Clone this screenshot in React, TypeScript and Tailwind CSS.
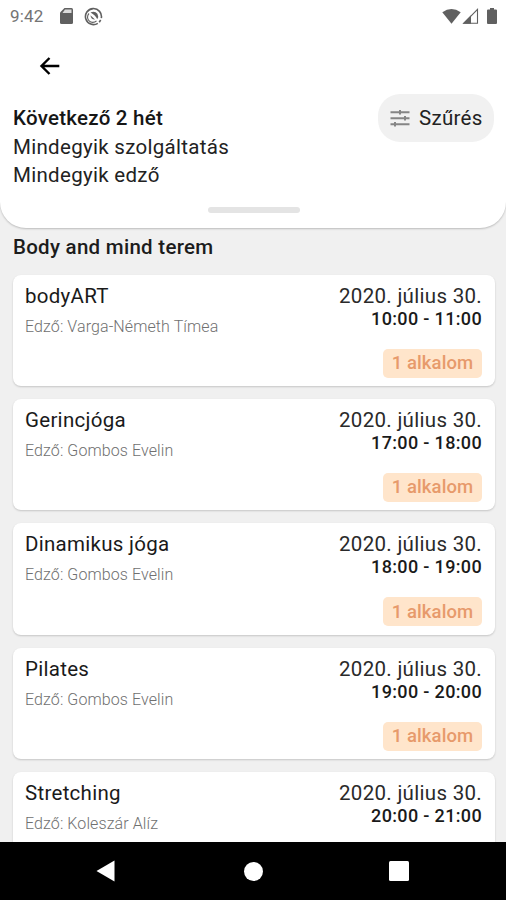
import React from "react";

const sessions = [
  { title: "bodyART", trainer: "Varga-Németh Tímea", date: "2020. július 30.", time: "10:00 - 11:00", badge: "1 alkalom" },
  { title: "Gerincjóga", trainer: "Gombos Evelin", date: "2020. július 30.", time: "17:00 - 18:00", badge: "1 alkalom" },
  { title: "Dinamikus jóga", trainer: "Gombos Evelin", date: "2020. július 30.", time: "18:00 - 19:00", badge: "1 alkalom" },
  { title: "Pilates", trainer: "Gombos Evelin", date: "2020. július 30.", time: "19:00 - 20:00", badge: "1 alkalom" },
  { title: "Stretching", trainer: "Koleszár Alíz", date: "2020. július 30.", time: "20:00 - 21:00" },
];

const StatusBar: React.FC = () => (
  <div className="flex h-8 items-center justify-between pl-[10px] pr-[9px] text-[#606060]">
    <div className="flex items-center">
      <span className="w-[50px] text-[17px] leading-none tracking-[0.2px] text-[#747474]">9:42</span>
      <svg width="13" height="16" viewBox="0 0 13 16">
        <path d="M4.5 0H11.5Q13 0 13 1.5V14.5Q13 16 11.5 16H1.5Q0 16 0 14.5V4.5Z" fill="currentColor" />
        <path d="M5 1.5H11.5V5H2.5Z" fill="#dcdcdc" />
      </svg>
      <svg className="ml-[11px]" width="19" height="19" viewBox="0 0 19 19" fill="none">
        <path d="M13.8 16.3A8 8 0 1 1 17.3 11.2" stroke="currentColor" strokeWidth="1.6" />
        <path d="M16.7 13L15.2 15.2" stroke="currentColor" strokeWidth="1.6" />
        <path d="M5 6.5A5.2 5.2 0 0 0 12.5 13.8" stroke="currentColor" strokeWidth="1.1" />
        <path d="M6.5 5.4Q11 3.6 13.4 6.8Q15 9.6 13.2 12.2Q11.5 8 6.5 5.4Z" fill="currentColor" />
        <path d="M6.4 8.2L11 12.4Q7 12.6 6.4 8.2Z" fill="currentColor" />
      </svg>
    </div>
    <div className="flex items-center">
      <svg width="19" height="15" viewBox="0 0 19 15">
        <path d="M0.3 3.3Q9.5 -3.3 18.7 3.3L9.5 14.8Z" fill="currentColor" />
      </svg>
      <svg className="ml-[1px]" width="17" height="16" viewBox="0 0 17 16">
        <path d="M1.8 15.3L15.5 1.4V15.3Z" fill="none" stroke="currentColor" strokeWidth="1.1" />
        <path d="M0.5 15.8L9 7.2V15.8Z" fill="currentColor" />
      </svg>
      <svg className="ml-[8px]" width="10" height="16" viewBox="0 0 10 16">
        <path d="M3 0H7V1.6H9Q10 1.6 10 2.6V15Q10 16 9 16H1Q0 16 0 15V2.6Q0 1.6 1 1.6H3Z" fill="currentColor" />
      </svg>
    </div>
  </div>
);

const FilterIcon: React.FC = () => (
  <svg width="20" height="18" viewBox="0 0 20 18" fill="none" stroke="#858585" strokeWidth="2">
    <path d="M0.5 3.2H19.5M0.5 9.3H19.5M0.5 15.2H19.5" />
    <path d="M10 0.9V5.5M15 7V11.6M5 12.9V17.5" strokeWidth="2" />
  </svg>
);

const Header: React.FC = () => (
  <header className="h-[228px] shrink-0 rounded-b-[26px] bg-white shadow-[0_1px_2px_rgba(0,0,0,0.22)]">
    <StatusBar />
    <div className="pl-[39px] pt-[24px]">
      <svg width="21" height="20" viewBox="0 0 21 20" fill="none" stroke="#000" strokeWidth="2.4">
        <path d="M20.3 10H2.8M10.5 2L2.5 10L10.5 18" />
      </svg>
    </div>
    <div className="flex justify-between pl-[13px] pr-[12px] pt-[18px]">
      <div className="pt-[10px] text-[20.5px] leading-[28.7px] tracking-[0.3px] text-[#222]">
        <p className="font-medium tracking-[0.25px] text-[#161616]">Következő 2 hét</p>
        <p>Mindegyik szolgáltatás</p>
        <p>Mindegyik edző</p>
      </div>
      <button className="flex h-[48px] w-[116px] items-center rounded-[22px] bg-[#f1f1f1] pl-[12px] text-[20.5px] tracking-[0.3px] text-[#222]">
        <FilterIcon />
        <span className="ml-[9px]">Szűrés</span>
      </button>
    </div>
    <div className="ml-[208px] mt-[17px] h-[6px] w-[92px] rounded-full bg-[#e4e4e4]" />
  </header>
);

const App: React.FC = () => {
  return (
    <div
      className="flex h-[900px] w-[506px] flex-col overflow-hidden bg-[#f0f0f0]"
      style={{ fontFamily: "Roboto, sans-serif" }}
    >
      <Header />

      <main className="min-h-0 flex-1 overflow-hidden pl-[12.5px] pr-[11.5px]">
        <h2 className="h-[46.5px] pl-[0.5px] pt-[5px] text-[20.5px] font-medium leading-[28px] tracking-[0.27px] text-[#1c1c1c]">
          Body and mind terem
        </h2>

        <div className="flex flex-col gap-[13px]">
          {sessions.map((s) => (
            <div
              key={s.title}
              className="flex h-[111.35px] shrink-0 justify-between rounded-[8px] bg-white px-[12.5px] shadow-[0_1px_2px_rgba(0,0,0,0.18)]"
            >
              <div>
                <h3 className="pt-[9px] text-[20.5px] leading-[24px] tracking-[0.28px] text-[#1a1a1a]">{s.title}</h3>
                <p className="mt-[9.3px] text-[16px] font-light leading-[20px] tracking-[0.1px] text-[#707070]">
                  Edző: {s.trainer}
                </p>
              </div>
              <div className="flex flex-col items-end">
                <p className="pt-[9px] text-[20.5px] leading-[24px] tracking-[0.3px] text-[#2a2a2a]">{s.date}</p>
                <p className="text-[18px] font-medium leading-[22.8px] tracking-[0.35px] text-[#1a1a1a]">{s.time}</p>
                {s.badge && (
                  <span className="mt-[18.5px] flex h-[29px] w-[99px] items-center justify-center rounded-[5px] bg-[#ffe5cb] pt-px text-[18.5px] font-medium tracking-[0.1px] text-[#e79a6b]">
                    {s.badge}
                  </span>
                )}
              </div>
            </div>
          ))}
        </div>
      </main>

      <nav className="flex h-[58px] shrink-0 items-center bg-black pl-[96px]">
        <svg width="19" height="22" viewBox="0 0 19 22">
          <path d="M0.5 11L18.5 0.5V21.5Z" fill="#fff" />
        </svg>
        <div className="ml-[129px] h-[19px] w-[19px] rounded-full bg-white" />
        <div className="ml-[126px] h-[20px] w-[20px] rounded-[1.5px] bg-white" />
      </nav>
    </div>
  );
};

export default App;
